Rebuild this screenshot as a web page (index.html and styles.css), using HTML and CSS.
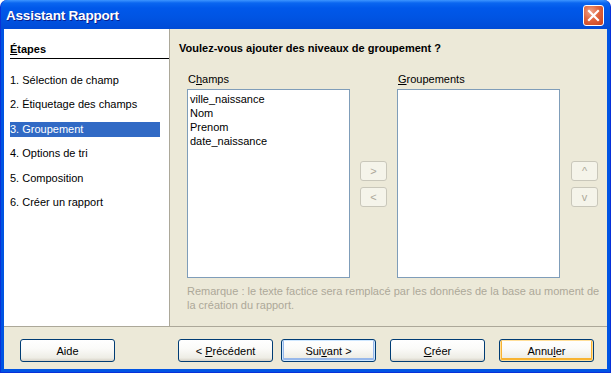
FILE: index.html
```html
<!DOCTYPE html>
<html lang="fr">
<head>
    <meta charset="UTF-8">
    <title>Assistant Rapport</title>
    <link rel="stylesheet" href="styles.css">
</head>
<body>
    <div class="window">
        <div class="titlebar">
            <span class="title">Assistant Rapport</span>
            <span class="close">
                <svg width="13" height="13" viewBox="0 0 13 13">
                    <path d="M2 2 L11 11 M11 2 L2 11" stroke="#fff" stroke-width="2.2" stroke-linecap="square"/>
                </svg>
            </span>
        </div>

        <div class="client">
            <div class="main">
                <div class="sidebar">
                    <div class="steps-title"><u>É</u>tapes</div>
                    <ul class="steps">
                        <li>1. Sélection de champ</li>
                        <li>2. Étiquetage des champs</li>
                        <li class="current"><span>3. Groupement</span></li>
                        <li>4. Options de tri</li>
                        <li>5. Composition</li>
                        <li>6. Créer un rapport</li>
                    </ul>
                </div>

                <div class="content">
                    <h2 class="question">Voulez-vous ajouter des niveaux de groupement ?</h2>

                    <div class="lists">
                        <div class="field">
                            <div class="label">C<u>h</u>amps</div>
                            <ul class="listbox">
                                <li>ville_naissance</li>
                                <li>Nom</li>
                                <li>Prenom</li>
                                <li>date_naissance</li>
                            </ul>
                        </div>
                        <div class="arrows">
                            <button class="small" disabled>&gt;</button>
                            <button class="small" disabled>&lt;</button>
                        </div>
                        <div class="field">
                            <div class="label"><u>G</u>roupements</div>
                            <ul class="listbox"></ul>
                        </div>
                        <div class="arrows">
                            <button class="small" disabled>^</button>
                            <button class="small" disabled>v</button>
                        </div>
                    </div>

                    <p class="note">Remarque : le texte factice sera remplacé par les données de la base au moment de<br>la création du rapport.</p>
                </div>
            </div>

            <div class="footer">
                <button class="btn">Aide</button>
                <div class="nav">
                    <button class="btn">&lt; <u>P</u>récédent</button>
                    <button class="btn default">Sui<u>v</u>ant &gt;</button>
                    <button class="btn wide"><u>C</u>réer</button>
                    <button class="btn hover wide">Annu<u>l</u>er</button>
                </div>
            </div>
        </div>
    </div>
</body>
</html>
```

FILE: styles.css
```css
body {
    margin: 0;
    font-family: "Liberation Sans", Arial, sans-serif;
    font-size: 11px;
    color: #000;
    background: #fff;
}

.window {
    width: 611px;
    height: 373px;
    box-sizing: border-box;
    background: #0054e3;
    border-left: 1px solid #0831d9;
    border-right: 1px solid #0831d9;
    border-bottom: 1px solid #0831d9;
    border-radius: 7px 7px 0 0;
    display: flex;
    flex-direction: column;
}

.titlebar {
    height: 29px;
    flex: none;
    display: flex;
    align-items: center;
    justify-content: space-between;
    padding: 0 6px 0 5px;
    border-radius: 7px 7px 0 0;
    background: linear-gradient(#3d95ff 0, #0a66f0 3px, #0058ea 8px, #0054e3 60%, #004bd6 100%);
}

.title {
    color: #fff;
    font-weight: bold;
    font-size: 13.5px;
    letter-spacing: -0.2px;
    text-shadow: 1px 1px 0 #0a1e8c;
    padding-top: 1px;
}

.close {
    width: 21px;
    height: 21px;
    box-sizing: border-box;
    border: 1px solid #fff;
    border-radius: 3px;
    background: radial-gradient(circle at 35% 30%, #f0a48a 0, #e0653e 45%, #c5401c 100%);
    display: flex;
    align-items: center;
    justify-content: center;
    margin-top: 1px;
}

.client {
    flex: 1;
    margin: 0 3px 3px 3px;
    background: #ece9d8;
    display: flex;
    flex-direction: column;
}

.main {
    height: 297px;
    display: flex;
    border-bottom: 1px solid #aca899;
}

.sidebar {
    width: 166px;
    background: #fff;
    border-right: 1px solid #aca899;
    padding: 14px 0 0 6px;
    box-sizing: border-box;
}

.steps-title {
    font-weight: bold;
    height: 15px;
    border-bottom: 1px solid #000;
    margin-bottom: 14px;
}

.steps {
    list-style-type: none;
    margin: 0;
    padding: 0;
}

.steps li {
    height: 24.4px;
    line-height: 15px;
}

.steps .current span {
    display: block;
    width: 150px;
    background: #316ac5;
    color: #fff;
}

.content {
    flex: 1;
    padding: 12px 0 0 9px;
}

.question {
    font-size: 11px;
    font-weight: bold;
    margin: 0;
    line-height: 14px;
    height: 14px;
}

.lists {
    display: flex;
    margin-top: 17px;
    padding-left: 8px;
}

.field {
    width: 163px;
}

.label {
    line-height: 14px;
    margin: 0 0 3px 1px;
}

.listbox {
    list-style-type: none;
    margin: 0;
    padding: 2px 0 0 2px;
    height: 189px;
    box-sizing: border-box;
    background: #fff;
    border: 1px solid #7f9db9;
}

.listbox li {
    line-height: 14px;
}

.arrows {
    display: flex;
    flex-direction: column;
    gap: 6px;
    padding-top: 89px;
    margin: 0 10px;
}

.arrows:last-child {
    margin: 0 0 0 11px;
}

.small {
    width: 27px;
    height: 20px;
    padding: 0;
    font-family: "Liberation Sans", Arial, sans-serif;
    font-size: 11px;
    color: #aca899;
    background: #f5f4ea;
    border: 1px solid #c9c7ba;
    border-radius: 3px;
}

.note {
    margin: 6px 0 0 8px;
    line-height: 14px;
    color: #aca899;
}

.footer {
    display: flex;
    padding: 12px 0 0 16px;
    gap: 63px;
}

.nav {
    display: flex;
    gap: 8px;
}

.btn {
    width: 95px;
    height: 23px;
    padding: 0;
    font-family: "Liberation Sans", Arial, sans-serif;
    font-size: 11px;
    color: #000;
    border: 1px solid #003c74;
    border-radius: 3px;
    background: linear-gradient(#ffffff 0, #fbfbf9 40%, #eeede5 85%, #d6d0c5 100%);
}

.btn.wide {
    margin-left: 6px;
}

.btn.default {
    box-shadow: inset 0 0 0 1px #cee7ff, inset 0 -1px 0 2px #98b8ea;
}

.btn.hover {
    box-shadow: inset 0 0 0 1px #ffdf9a, inset 0 -1px 0 2px #f8b330;
}
```
